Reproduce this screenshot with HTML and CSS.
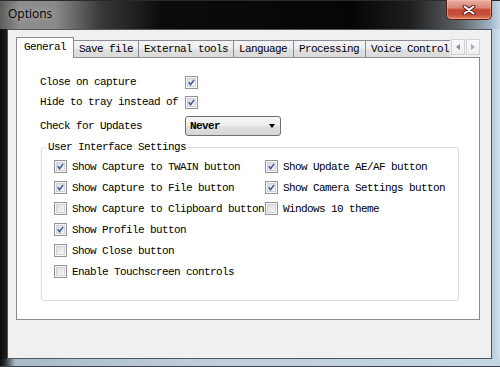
FILE: index.html
```html
<!DOCTYPE html>
<html lang="en">
<head>
    <meta charset="UTF-8">
    <title>Options</title>
    <link rel="stylesheet" href="styles.css">
</head>
<body>
    <div class="window">
        <div class="titlebar">
            <span class="title">Options</span>
            <div class="close-btn">
                <svg width="14" height="10" viewBox="0 0 14 10">
                    <path d="M2.5 1.5 11.5 8.5 M11.5 1.5 2.5 8.5" stroke="#5c1d14" stroke-width="4" stroke-linecap="round"/>
                    <path d="M2.5 1.5 11.5 8.5 M11.5 1.5 2.5 8.5" stroke="#ffffff" stroke-width="2" stroke-linecap="round"/>
                </svg>
            </div>
        </div>

        <div class="frame">
            <div class="client">
                <div class="tabs">
                    <div class="tab-track">
                        <div class="tab active">General</div>
                        <div class="tab tab-save">Save file</div>
                        <div class="tab tab-external">External tools</div>
                        <div class="tab tab-language">Language</div>
                        <div class="tab tab-processing">Processing</div>
                        <div class="tab tab-voice">Voice Control</div>
                    </div>
                    <div class="tab-arrows">
                        <div class="arrow-btn"><span class="arrow-left"></span></div>
                        <div class="arrow-btn"><span class="arrow-right"></span></div>
                    </div>
                </div>

                <div class="panel">
                    <div class="opt-row">
                        <span class="opt-label">Close on capture</span>
                        <span class="check"><svg viewBox="0 0 13 13"><path d="M3.2 6.3 5.4 9 9.6 3.4"/></svg></span>
                    </div>
                    <div class="opt-row">
                        <span class="opt-label">Hide to tray instead of</span>
                        <span class="check"><svg viewBox="0 0 13 13"><path d="M3.2 6.3 5.4 9 9.6 3.4"/></svg></span>
                    </div>
                    <div class="opt-row opt-select">
                        <span class="opt-label">Check for Updates</span>
                        <div class="select">
                            <span>Never</span>
                            <span class="caret"></span>
                        </div>
                    </div>

                    <fieldset class="group">
                        <legend>User Interface Settings</legend>
                        <div class="group-cols">
                            <div class="col col-left">
                                <div class="cb-row">
                                    <span class="check"><svg viewBox="0 0 13 13"><path d="M3.2 6.3 5.4 9 9.6 3.4"/></svg></span>
                                    <span>Show Capture to TWAIN button</span>
                                </div>
                                <div class="cb-row">
                                    <span class="check"><svg viewBox="0 0 13 13"><path d="M3.2 6.3 5.4 9 9.6 3.4"/></svg></span>
                                    <span>Show Capture to File button</span>
                                </div>
                                <div class="cb-row">
                                    <span class="check"></span>
                                    <span>Show Capture to Clipboard button</span>
                                </div>
                                <div class="cb-row">
                                    <span class="check"><svg viewBox="0 0 13 13"><path d="M3.2 6.3 5.4 9 9.6 3.4"/></svg></span>
                                    <span>Show Profile button</span>
                                </div>
                                <div class="cb-row">
                                    <span class="check"></span>
                                    <span>Show Close button</span>
                                </div>
                                <div class="cb-row">
                                    <span class="check"></span>
                                    <span>Enable Touchscreen controls</span>
                                </div>
                            </div>
                            <div class="col">
                                <div class="cb-row">
                                    <span class="check"><svg viewBox="0 0 13 13"><path d="M3.2 6.3 5.4 9 9.6 3.4"/></svg></span>
                                    <span>Show Update AE/AF button</span>
                                </div>
                                <div class="cb-row">
                                    <span class="check"><svg viewBox="0 0 13 13"><path d="M3.2 6.3 5.4 9 9.6 3.4"/></svg></span>
                                    <span>Show Camera Settings button</span>
                                </div>
                                <div class="cb-row">
                                    <span class="check"></span>
                                    <span>Windows 10 theme</span>
                                </div>
                            </div>
                        </div>
                    </fieldset>
                </div>
            </div>
        </div>
        <div class="frame-bottom"></div>
    </div>
</body>
</html>
```

FILE: styles.css
```css
body {
    margin: 0;
    background: #000;
}

.window {
    width: 500px;
    height: 367px;
    display: flex;
    flex-direction: column;
    overflow: hidden;
}

/* title bar */
.titlebar {
    height: 29px;
    flex-shrink: 0;
    display: flex;
    align-items: flex-start;
    justify-content: space-between;
    background: linear-gradient(90deg, #5c5c5c 0%, #8e8e8e 4%, #8a8a8a 11%, #3a3a3a 20%, #0c0c0c 32%, #050505 70%, #1e1e1e 82%, #5f6368 92%, #9fb2c2 98%, #c7d9e8 100%);
    box-shadow: inset 0 1px 0 #2a2a2a;
}

.title {
    padding: 6px 0 0 8px;
    font-family: "Open Sans", sans-serif;
    font-size: 12px;
    line-height: 16px;
    color: #000;
    text-shadow: 0 0 6px rgba(255, 255, 255, 0.55);
}

.close-btn {
    width: 46px;
    height: 20px;
    margin-right: 8px;
    box-sizing: border-box;
    border: 1px solid #5e1b12;
    border-top: none;
    border-radius: 0 0 5px 5px;
    background: linear-gradient(#e8b0a4 0%, #d98676 40%, #c44a33 52%, #c4503a 78%, #e1845f 100%);
    box-shadow: inset 0 0 0 1px rgba(255, 200, 185, 0.45);
    display: flex;
    align-items: center;
    justify-content: center;
}

/* frame */
.frame {
    flex: 1;
    display: flex;
    padding: 0 8px 0 7px;
    background: linear-gradient(90deg, #0a0a0a 0%, #1b1b1b 1%, #0d0d0d 50%, #2f3840 96%, #b7cbdc 98.4%, #d2e2ef 100%);
}

.frame-bottom {
    height: 8px;
    flex-shrink: 0;
    background: linear-gradient(90deg, #0b0b0b 0%, #2a2f35 1%, #a9bac8 3%, #c0ceda 40%, #c6d6e4 100%);
    box-shadow: inset 0 -1px 0 #3c4550;
}

.client {
    flex: 1;
    border: 1px solid #4e5660;
    background: #f0f0f0;
    padding: 7px 11px 0 8px;
    font-family: "Liberation Mono", monospace;
    font-size: 11px;
    letter-spacing: -0.6px;
    color: #000;
}

/* tabs */
.tabs {
    display: flex;
    height: 21px;
    margin-bottom: -1px;
    position: relative;
    z-index: 1;
}

.tab-track {
    width: 434px;
    flex-shrink: 0;
    display: flex;
    align-items: flex-end;
    overflow: hidden;
}

.tab {
    flex-shrink: 0;
    height: 18px;
    box-sizing: border-box;
    margin-left: -1px;
    padding-left: 5px;
    border: 1px solid #898c95;
    background: linear-gradient(#f5f5f5 0%, #ececec 50%, #e2e2e2 51%, #d9d9d9 100%);
    line-height: 16px;
    white-space: nowrap;
}

.tab.active {
    margin-left: 0;
    width: 58px;
    height: 21px;
    padding-left: 7px;
    border-bottom: none;
    background: #fff;
    position: relative;
    z-index: 1;
    line-height: 19px;
}

.tab-save { width: 66px; }
.tab-external { width: 96px; }
.tab-language { width: 61px; }
.tab-processing { width: 73px; }
.tab-voice { width: 92px; }

.tab-arrows {
    display: flex;
    gap: 1px;
    margin: 2px 0 0 1px;
}

.arrow-btn {
    width: 14px;
    height: 16px;
    box-sizing: border-box;
    border: 1px solid #cfd3d8;
    background: linear-gradient(#fafafa, #eeeeee);
    display: flex;
    align-items: center;
    justify-content: center;
}

.arrow-left {
    border-top: 3.5px solid transparent;
    border-bottom: 3.5px solid transparent;
    border-right: 4px solid #7d8fa8;
}

.arrow-right {
    border-top: 3.5px solid transparent;
    border-bottom: 3.5px solid transparent;
    border-left: 4px solid #9eacc0;
}

/* panel */
.panel {
    height: 263px;
    box-sizing: border-box;
    border: 1px solid #898c95;
    background: #fff;
    padding: 14px 0 0 23px;
}

.opt-row {
    height: 20px;
    display: flex;
    align-items: center;
}

.opt-label {
    width: 145px;
    flex-shrink: 0;
}

.opt-select {
    margin-top: 4px;
}

.select {
    width: 96px;
    height: 20px;
    box-sizing: border-box;
    border: 1px solid #707070;
    border-radius: 3px;
    background: linear-gradient(#f6f6f6 0%, #ececec 50%, #e0e0e0 52%, #d6d6d6 100%);
    display: flex;
    align-items: center;
    justify-content: space-between;
    padding: 0 5px 0 4px;
    font-weight: bold;
}

.caret {
    border-top: 4px solid #000;
    border-left: 3.5px solid transparent;
    border-right: 3.5px solid transparent;
}

/* checkbox */
.check {
    width: 13px;
    height: 13px;
    flex-shrink: 0;
    box-sizing: border-box;
    border: 1px solid #959595;
    background: linear-gradient(135deg, #d4d6d9 0%, #ebecee 55%, #fbfbfb 100%);
    box-shadow: inset 0 0 0 1px #f6f6f6, inset 0 0 0 2px #d0d3d7;
    display: flex;
}

.check svg {
    width: 11px;
    height: 11px;
}

.check path {
    fill: none;
    stroke: #425d92;
    stroke-width: 1.9;
}

/* group box */
.group {
    width: 418px;
    box-sizing: border-box;
    margin: 4px 0 0 1px;
    padding: 2px 0 18px 12px;
    border: 1px solid #d8dde2;
    border-radius: 3px;
}

.group legend {
    padding: 0 2px;
    margin-left: -8px;
    line-height: 14px;
}

.group-cols {
    display: flex;
}

.col-left {
    width: 211px;
    flex-shrink: 0;
}

.cb-row {
    height: 21px;
    display: flex;
    align-items: center;
    gap: 5px;
    white-space: nowrap;
}
```
